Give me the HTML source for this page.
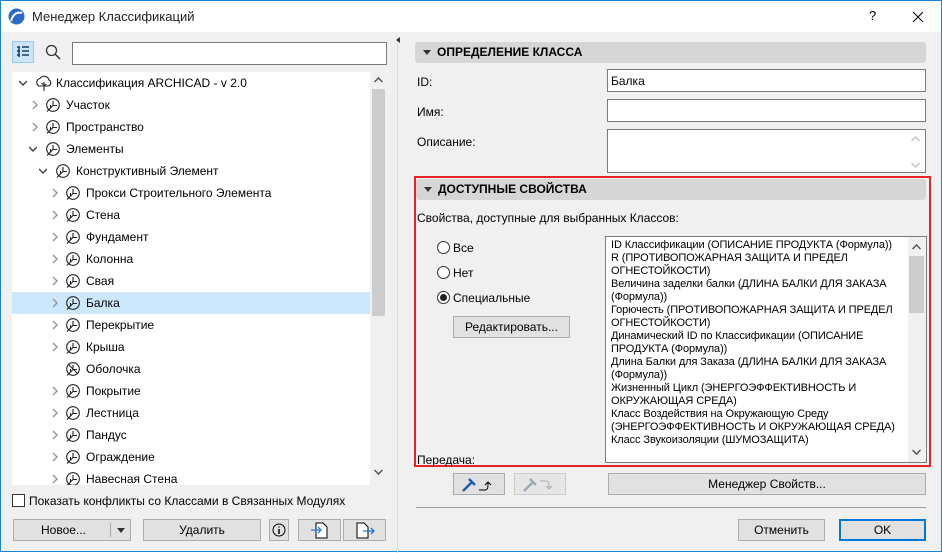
<!DOCTYPE html><html><head><meta charset="utf-8"><style>
*{box-sizing:border-box}body{margin:0;width:942px;height:552px;overflow:hidden;font-family:"Liberation Sans",sans-serif;font-size:12px;color:#000}
.win{position:absolute;left:0;top:0;width:942px;height:552px;border:1px solid #1883d7;background:#f0f0f0}
.tb{position:absolute;left:0;top:0;width:940px;height:31px;background:#fff}
.a{position:absolute;white-space:nowrap}
.row{position:absolute;left:11px;width:358px;height:22px;line-height:22px}
.btn{position:absolute;background:#e1e1e1;border:1px solid #adadad;text-align:center;line-height:20px}
.inp{position:absolute;background:#fff;border:1px solid #7a7a7a}
.hdr{position:absolute;background:#d6d6d6;border-radius:3px;font-weight:bold;line-height:21px;padding-left:22px;font-size:12px}
.hdr:before{content:"";position:absolute;left:8px;top:8px;border:4px solid transparent;border-top:5px solid #333;border-bottom:0}
.rad{position:absolute;width:13px;height:13px;border:1px solid #333;border-radius:50%;background:#fff}
.li{position:absolute;left:610px;font-size:11px;line-height:13px;width:295px;letter-spacing:-0.1px}
.ic{position:absolute;width:16px;height:16px}
.cr{position:absolute;width:8px;height:10px}
</style></head><body>
<svg width="0" height="0" style="position:absolute"><defs>
<g id="leaf"><circle cx="8" cy="8" r="6.3" fill="none" stroke="#222" stroke-width="1.1"/><path d="M2 14.5L8 8.5M8 8.5V4M8 8.5h4M5.5 11V8" stroke="#222" stroke-width="1.1" fill="none"/></g>
<g id="cr"><path d="M2 1l4 4-4 4" stroke="#999" stroke-width="1.5" fill="none"/></g>
<g id="cd"><path d="M0 2l4 4 4-4" stroke="#444" stroke-width="1.5" fill="none"/></g>
</defs></svg>
<div class="win">
<div class="tb">
<svg class="a" style="left:7px;top:7px" width="17" height="17"><circle cx="8.5" cy="8.5" r="8" fill="#2a6bc4"/><path d="M3 13 Q6 3 14 5" stroke="#fff" stroke-width="2" fill="none"/></svg>
<div class="a" style="left:31px;top:8px;font-size:13px;color:#222">Менеджер Классификаций</div>
<div class="a" style="left:868px;top:7px;font-size:13px">?</div>
<svg class="a" style="left:911px;top:10px" width="12" height="12"><path d="M1 1L11 11M11 1L1 11" stroke="#000"/></svg>
</div>
<div class="a" style="left:11px;top:40px;width:22px;height:22px;background:#cce4f7;border:1px solid #99c9ef"></div>
<svg class="a" style="left:15px;top:44px" width="14" height="14"><path d="M1 2h3M1 6h3M1 10h3M3 2v10M6 2h7M6 6h7M6 10h7" stroke="#1a3d6d" stroke-width="1.5"/></svg>
<svg class="a" style="left:44px;top:43px" width="16" height="16"><circle cx="6.5" cy="6.5" r="5" stroke="#333" fill="none" stroke-width="1.3"/><path d="M10 10l5 5" stroke="#333" stroke-width="1.5"/></svg>
<div class="inp" style="left:71px;top:41px;width:315px;height:23px"></div>
<div class="a" style="left:11px;top:71px;width:358px;height:413px;background:#fff"></div>
<div class="a" style="left:369px;top:71px;width:17px;height:413px;background:#f0f0f0"></div>
<div class="a" style="left:371px;top:88px;width:13px;height:227px;background:#cdcdcd"></div>
<svg class="a" style="left:373px;top:76px" width="9" height="6"><path d="M0.5 5l4-4 4 4" stroke="#555" stroke-width="1.5" fill="none"/></svg>
<svg class="a" style="left:373px;top:468px" width="9" height="6"><path d="M0.5 1l4 4 4-4" stroke="#555" stroke-width="1.5" fill="none"/></svg>
<div class="row" style="top:291px;background:#cce8ff"></div>
<div style="position:absolute;left:0;top:0;width:369px;height:484px;overflow:hidden">
<svg class="cr" style="left:18px;top:78px"><use href="#cd"/></svg>
<svg class="a" style="left:33px;top:73px" width="20" height="18"><path d="M5 12a4 4 0 0 1 1-7.5 5 5 0 0 1 9 1.5 3.2 3.2 0 0 1-1 6H5z" fill="none" stroke="#222" stroke-width="1.1"/><path d="M10 17V8M10 11l-2.5-2M10 12l2.5-2" stroke="#222" stroke-width="1.1"/></svg>
<div class="a" style="left:55px;top:75px">Классификация ARCHICAD - v 2.0</div>
<svg class="cr" style="left:30px;top:99px"><use href="#cr"/></svg><svg class="ic" style="left:44px;top:96px"><use href="#leaf"/></svg><div class="a" style="left:65px;top:97px">Участок</div>
<svg class="cr" style="left:30px;top:121px"><use href="#cr"/></svg><svg class="ic" style="left:44px;top:118px"><use href="#leaf"/></svg><div class="a" style="left:65px;top:119px">Пространство</div>
<svg class="cr" style="left:28px;top:144px"><use href="#cd"/></svg><svg class="ic" style="left:44px;top:140px"><use href="#leaf"/></svg><div class="a" style="left:65px;top:141px">Элементы</div>
<svg class="cr" style="left:38px;top:166px"><use href="#cd"/></svg><svg class="ic" style="left:54px;top:162px"><use href="#leaf"/></svg><div class="a" style="left:75px;top:163px">Конструктивный Элемент</div>
<svg class="cr" style="left:50px;top:187px"><use href="#cr"/></svg><svg class="ic" style="left:64px;top:184px"><use href="#leaf"/></svg><div class="a" style="left:85px;top:185px">Прокси Строительного Элемента</div>
<svg class="cr" style="left:50px;top:209px"><use href="#cr"/></svg><svg class="ic" style="left:64px;top:206px"><use href="#leaf"/></svg><div class="a" style="left:85px;top:207px">Стена</div>
<svg class="cr" style="left:50px;top:231px"><use href="#cr"/></svg><svg class="ic" style="left:64px;top:228px"><use href="#leaf"/></svg><div class="a" style="left:85px;top:229px">Фундамент</div>
<svg class="cr" style="left:50px;top:253px"><use href="#cr"/></svg><svg class="ic" style="left:64px;top:250px"><use href="#leaf"/></svg><div class="a" style="left:85px;top:251px">Колонна</div>
<svg class="cr" style="left:50px;top:275px"><use href="#cr"/></svg><svg class="ic" style="left:64px;top:272px"><use href="#leaf"/></svg><div class="a" style="left:85px;top:273px">Свая</div>
<svg class="cr" style="left:50px;top:297px"><use href="#cr"/></svg><svg class="ic" style="left:64px;top:294px"><use href="#leaf"/></svg><div class="a" style="left:85px;top:295px">Балка</div>
<svg class="cr" style="left:50px;top:319px"><use href="#cr"/></svg><svg class="ic" style="left:64px;top:316px"><use href="#leaf"/></svg><div class="a" style="left:85px;top:317px">Перекрытие</div>
<svg class="cr" style="left:50px;top:341px"><use href="#cr"/></svg><svg class="ic" style="left:64px;top:338px"><use href="#leaf"/></svg><div class="a" style="left:85px;top:339px">Крыша</div>
<svg class="ic" style="left:64px;top:360px"><use href="#leaf"/><path d="M3 3l10 10" stroke="#222"/></svg><div class="a" style="left:85px;top:361px">Оболочка</div>
<svg class="cr" style="left:50px;top:385px"><use href="#cr"/></svg><svg class="ic" style="left:64px;top:382px"><use href="#leaf"/></svg><div class="a" style="left:85px;top:383px">Покрытие</div>
<svg class="cr" style="left:50px;top:407px"><use href="#cr"/></svg><svg class="ic" style="left:64px;top:404px"><use href="#leaf"/></svg><div class="a" style="left:85px;top:405px">Лестница</div>
<svg class="cr" style="left:50px;top:429px"><use href="#cr"/></svg><svg class="ic" style="left:64px;top:426px"><use href="#leaf"/></svg><div class="a" style="left:85px;top:427px">Пандус</div>
<svg class="cr" style="left:50px;top:451px"><use href="#cr"/></svg><svg class="ic" style="left:64px;top:448px"><use href="#leaf"/></svg><div class="a" style="left:85px;top:449px">Ограждение</div>
<svg class="cr" style="left:50px;top:473px"><use href="#cr"/></svg><svg class="ic" style="left:64px;top:470px"><use href="#leaf"/></svg><div class="a" style="left:85px;top:471px">Навесная Стена</div>
</div>
<div class="a" style="left:11px;top:493px;width:13px;height:13px;background:#fff;border:1px solid #333"></div>
<div class="a" style="left:28px;top:493px">Показать конфликты со Классами в Связанных Модулях</div>
<div class="btn" style="left:12px;top:518px;width:118px;height:22px;text-align:left;padding-left:27px">Новое...<span style="position:absolute;left:96px;top:3px;height:14px;border-left:1px solid #aaa"></span><span style="position:absolute;left:103px;top:8px;border:4px solid transparent;border-top:5px solid #333"></span></div>
<div class="btn" style="left:142px;top:518px;width:118px;height:22px">Удалить</div>
<div class="btn" style="left:268px;top:518px;width:20px;height:22px"><svg width="14" height="14" style="margin-top:3px"><circle cx="7" cy="7" r="6" stroke="#000" fill="none"/><path d="M7 6v5M7 3.5v1" stroke="#000" stroke-width="1.5"/></svg></div>
<div class="btn" style="left:297px;top:518px;width:43px;height:22px"><svg width="20" height="18" style="margin-top:1px"><path d="M6 2h7l4 4v11H6z" stroke="#000" fill="#fff"/><path d="M1 9h10M8 6l3 3-3 3" stroke="#1d7ad9" fill="none" stroke-width="1.3"/></svg></div>
<div class="btn" style="left:342px;top:518px;width:43px;height:22px"><svg width="20" height="18" style="margin-top:1px"><path d="M2 2h7l4 4v11H2z" stroke="#000" fill="#fff"/><path d="M8 10h11M16 7l3 3-3 3" stroke="#1d7ad9" fill="none" stroke-width="1.3"/></svg></div>
<div class="a" style="left:396px;top:34px;width:1px;height:518px;background:#ddd"></div>
<div class="a" style="left:395px;top:36px;border:3px solid transparent;border-right:4px solid #333;border-left:0"></div>
<div class="hdr" style="left:414px;top:41px;width:511px;height:21px">ОПРЕДЕЛЕНИЕ КЛАССА</div>
<div class="a" style="left:416px;top:74px">ID:</div><div class="inp" style="left:606px;top:68px;width:319px;height:23px;padding:4px 3px">Балка</div>
<div class="a" style="left:416px;top:104px">Имя:</div><div class="inp" style="left:606px;top:98px;width:319px;height:23px"></div>
<div class="a" style="left:416px;top:134px">Описание:</div><div class="inp" style="left:606px;top:128px;width:319px;height:44px">
<svg class="a" style="right:5px;top:6px" width="9" height="6"><path d="M0.5 5l4-4 4 4" stroke="#bbb" stroke-width="1.3" fill="none"/></svg>
<svg class="a" style="right:5px;top:32px" width="9" height="6"><path d="M0.5 1l4 4 4-4" stroke="#bbb" stroke-width="1.3" fill="none"/></svg></div>
<div class="a" style="left:413px;top:175px;width:517px;height:291px;border:2px solid #e8242a"></div>
<div class="hdr" style="left:415px;top:178px;width:510px;height:21px">ДОСТУПНЫЕ СВОЙСТВА</div>
<div class="a" style="left:416px;top:210px">Свойства, доступные для выбранных Классов:</div>
<div class="rad" style="left:436px;top:240px"></div><div class="a" style="left:452px;top:240px">Все</div>
<div class="rad" style="left:436px;top:265px"></div><div class="a" style="left:452px;top:265px">Нет</div>
<div class="rad" style="left:436px;top:290px"><div style="width:7px;height:7px;border-radius:50%;background:#222;margin:2px"></div></div><div class="a" style="left:452px;top:290px">Специальные</div>
<div class="btn" style="left:452px;top:315px;width:117px;height:22px">Редактировать...</div>
<div class="a" style="left:604px;top:235px;width:322px;height:227px;background:#fff;border:1px solid #7a7a7a;overflow:hidden">
<div class="li" style="left:5px;top:2px">ID Классификации (ОПИСАНИЕ ПРОДУКТА (Формула))<br>R (ПРОТИВОПОЖАРНАЯ ЗАЩИТА И ПРЕДЕЛ<br>ОГНЕСТОЙКОСТИ)<br>Величина заделки балки (ДЛИНА БАЛКИ ДЛЯ ЗАКАЗА<br>(Формула))<br>Горючесть (ПРОТИВОПОЖАРНАЯ ЗАЩИТА И ПРЕДЕЛ<br>ОГНЕСТОЙКОСТИ)<br>Динамический ID по Классификации (ОПИСАНИЕ<br>ПРОДУКТА (Формула))<br>Длина Балки для Заказа (ДЛИНА БАЛКИ ДЛЯ ЗАКАЗА<br>(Формула))<br>Жизненный Цикл (ЭНЕРГОЭФФЕКТИВНОСТЬ И<br>ОКРУЖАЮЩАЯ СРЕДА)<br>Класс Воздействия на Окружающую Среду<br>(ЭНЕРГОЭФФЕКТИВНОСТЬ И ОКРУЖАЮЩАЯ СРЕДА)<br>Класс Звукоизоляции (ШУМОЗАЩИТА)</div>
<div class="a" style="left:302px;top:0;width:18px;height:225px;background:#f0f0f0"></div>
<div class="a" style="left:303px;top:19px;width:15px;height:57px;background:#cdcdcd"></div>
<svg class="a" style="left:306px;top:7px" width="9" height="6"><path d="M0.5 5l4-4 4 4" stroke="#555" stroke-width="1.5" fill="none"/></svg>
<svg class="a" style="left:306px;top:212px" width="9" height="6"><path d="M0.5 1l4 4 4-4" stroke="#555" stroke-width="1.5" fill="none"/></svg>
</div>
<div class="a" style="left:416px;top:452px">Передача:</div>
<div class="btn" style="left:452px;top:472px;width:52px;height:22px"><svg width="40" height="18" style="margin-top:1px"><path d="M4 16l9-9M10 4l6 6" stroke="#1d5fb0" stroke-width="2.5"/><path d="M20 15h6c3 0 3-3 3-7M26 10l3-3 3 3" stroke="#000" fill="none"/></svg></div>
<div class="btn" style="left:513px;top:472px;width:52px;height:22px;background:#e6e6e6;border-color:#ccc"><svg width="40" height="18" style="margin-top:1px"><path d="M4 16l9-9M10 4l6 6" stroke="#9ab" stroke-width="2.5"/><path d="M20 6h6c3 0 3 3 3 7M26 11l3 3 3-3" stroke="#aaa" fill="none"/></svg></div>
<div class="btn" style="left:607px;top:472px;width:318px;height:22px">Менеджер Свойств...</div>
<div class="a" style="left:415px;top:506px;width:510px;height:1px;background:#a0a0a0"></div>
<div class="btn" style="left:737px;top:518px;width:87px;height:22px">Отменить</div>
<div class="btn" style="left:838px;top:518px;width:87px;height:22px;border:2px solid #0078d7;line-height:18px">OK</div>
</div></body></html>
